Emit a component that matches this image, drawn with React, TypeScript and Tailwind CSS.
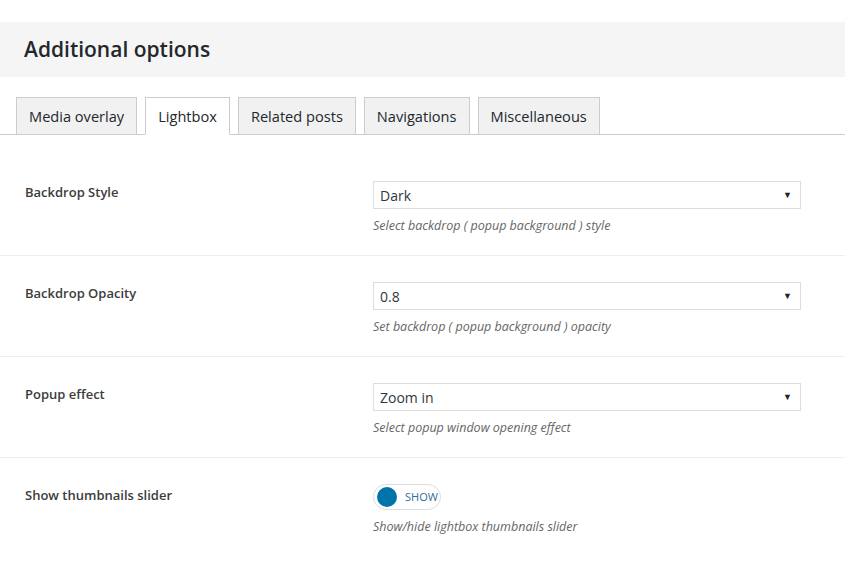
import React from "react";

const font = { fontFamily: '"Open Sans", "Noto Sans", sans-serif' };

function Select({ value }: { value: string }) {
  return (
    <div className="flex h-[28px] w-[428px] items-center justify-between border border-[#dddddd] bg-white pl-[6px] pr-[8px] text-[14px] text-[#32373c]">
      <span>{value}</span>
      <span className="text-[9px] text-[#222]">▼</span>
    </div>
  );
}

function Toggle() {
  return (
    <div className="flex h-[26px] w-[68px] items-center rounded-full border border-[#dddddd] bg-white pl-[3px]">
      <div className="h-[20px] w-[20px] rounded-full bg-[#0073aa]" />
      <span className="ml-[8px] text-[11px] text-[#2e6f9a]">SHOW</span>
    </div>
  );
}

function Row({ label, control, desc, last }: { label: string; control: React.ReactNode; desc: string; last?: boolean }) {
  return (
    <div className={last ? "flex pt-[26px] pb-[20px]" : "flex border-b border-[#eeeeee] pt-[26px] pb-[20px]"}>
      <div className="w-[373px] pl-[25px] pt-[1px] text-[13px] font-semibold leading-[20px] text-[#3c3c3c]">{label}</div>
      <div className="flex flex-col">
        {control}
        <div className="mt-[8px] text-[12.5px] italic leading-[18px] text-[#666666]">{desc}</div>
      </div>
    </div>
  );
}

export default function App() {
  const tabs = ["Media overlay", "Lightbox", "Related posts", "Navigations", "Miscellaneous"];
  return (
    <div className="h-[588px] w-[845px] overflow-hidden bg-white" style={font}>
      <div className="h-[22px]" />
      <div className="flex h-[55px] items-center bg-[#f5f5f5] pl-[24px]">
        <h2 className="text-[21px] font-semibold text-[#23282d]">Additional options</h2>
      </div>
      <div className="mt-[20px] flex gap-[8px] border-b border-[#cccccc] pl-[16px]">
        {tabs.map((t) => (
          <div
            key={t}
            className={
              t === "Lightbox"
                ? "-mb-px flex h-[38px] items-center border border-[#cccccc] border-b-white bg-white px-[12px] pt-[1px] text-[14.6px] text-[#23282d]"
                : "flex h-[37px] items-center border border-b-0 border-[#cccccc] bg-[#f1f1f1] px-[12px] pt-[1px] text-[14.6px] text-[#23282d]"
            }
          >
            {t}
          </div>
        ))}
      </div>
      <div className="pt-[20px]">
        <Row label="Backdrop Style" control={<Select value="Dark" />} desc="Select backdrop ( popup background ) style" />
        <Row label="Backdrop Opacity" control={<Select value="0.8" />} desc="Set backdrop ( popup background ) opacity" />
        <Row label="Popup effect" control={<Select value="Zoom in" />} desc="Select popup window opening effect" />
        <Row label="Show thumbnails slider" control={<Toggle />} desc="Show/hide lightbox thumbnails slider" last />
      </div>
    </div>
  );
}
